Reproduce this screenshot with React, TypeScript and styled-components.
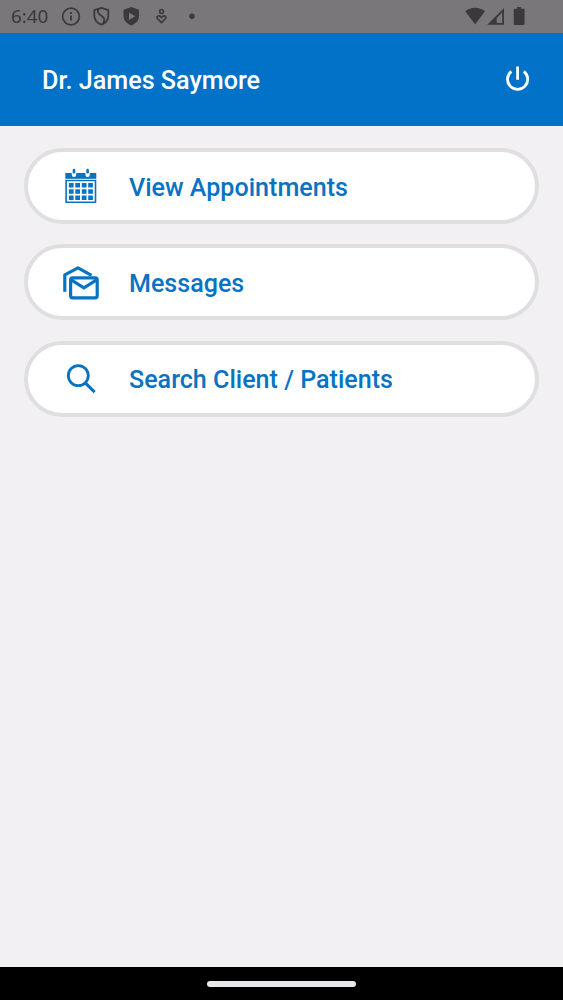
import React from "react";
import styled, { createGlobalStyle } from "styled-components";

const Global = createGlobalStyle`
  * { box-sizing: border-box; }
  body { margin: 0; background: #f2f0f3; font-family: Roboto, "Liberation Sans", sans-serif; }
  svg { display: block; flex: none; }
`;
const Screen = styled.div`
  width: 100%;
  height: 1000px;
  display: flex;
  flex-direction: column;
  background: #f2f0f3;
  overflow: hidden;
`;
const StatusBar = styled.div`
  height: 33px;
  flex: none;
  display: flex;
  align-items: center;
  justify-content: space-between;
  padding: 0 36px 0 11px;
  background: #7a777a;
  color: #3b393c;
`;
const StatusGroup = styled.div`
  display: flex;
  align-items: center;
`;
const Clock = styled.span`
  width: 50px;
  font-family: "Noto Sans", sans-serif;
  font-size: 18.8px;
  line-height: 33px;
  white-space: nowrap;
`;
const Header = styled.header`
  height: 93px;
  flex: none;
  display: flex;
  align-items: center;
  justify-content: space-between;
  padding: 0 31px 0 42px;
  background: #0271c8;
  color: #fff;
`;
const Title = styled.h1`
  margin: 3px 0 0;
  font-size: 25.15px;
  line-height: 32px;
  font-weight: 500;
  white-space: nowrap;
`;
const Menu = styled.main`
  flex: 1;
  display: flex;
  flex-direction: column;
  gap: 20.4px;
  padding: 22px 24px 0;
`;
const MenuButton = styled.button`
  height: 76px;
  flex: none;
  display: flex;
  align-items: center;
  gap: 30px;
  padding: 0 0 0 35px;
  border: 4px solid #dfdfe1;
  border-radius: 38px;
  background: #fff;
  color: #0873c2;
  font: 500 25.08px/32px Roboto, "Liberation Sans", sans-serif;
  text-align: left;
`;
const Label = styled.span`
  margin-top: 3px;
  white-space: nowrap;
`;
const NavBar = styled.div`
  height: 33px;
  flex: none;
  display: flex;
  align-items: center;
  justify-content: center;
  background: #000;
`;
const Handle = styled.div`
  width: 149px;
  height: 6px;
  border-radius: 3px;
  background: #ebe9eb;
`;

const NoticeIcons = () => (
  <svg width="140" height="33" viewBox="61 0 140 33" fill="none" stroke="currentColor">
    <circle cx="71" cy="16.5" r="8.4" strokeWidth="1.7" />
    <path d="M71 15.5v5M71 12v2" strokeWidth="1.8" />
    <path d="M94.3 10.2 101.5 7.8 108.3 10.2v5.3c0 4.2-2.7 7.6-6.8 9.2-4.2-1.6-7.2-5-7.2-9.2z" strokeWidth="1.8" strokeLinejoin="round" />
    <path d="M98.5 8.9c-1.8 3.5 0 5.2 3.2 7.2 3 1.9 3.2 4.6 1.4 7.4" strokeWidth="1.8" />
    <path d="M131.3 7 139 9.8v6c0 4.6-3.2 8.1-7.7 9.6-4.6-1.5-7.8-5-7.8-9.6v-6z" fill="currentColor" stroke="none" />
    <path d="M129 12.4v7.6l6.2-3.8z" fill="#7a777a" stroke="none" />
    <circle cx="161.5" cy="11.5" r="1.9" strokeWidth="1.5" />
    <path d="M161.5 22.6 157.5 18.5c-1.7-2.1 1.6-4.1 4-1.1 2.4-3 5.7-1 4 1.1z" strokeWidth="1.7" />
    <circle cx="192" cy="16.3" r="2.7" fill="currentColor" stroke="none" />
  </svg>
);
const SystemIcons = () => (
  <svg width="62" height="33" viewBox="465 0 62 33" fill="currentColor">
    <path d="M465.2 11.3c5.4-4.9 14.4-4.9 19.8 0L475.1 24.5z" />
    <path fillRule="evenodd" d="M504 8v16.7h-16.7zM502.2 12.5l-5.5 5.6v4.8h5.5z" />
    <path d="M517 7h4.2v1.8h2.2c.7 0 1.2.5 1.2 1.2v13.8c0 .7-.5 1.2-1.2 1.2h-8.5c-.7 0-1.2-.5-1.2-1.2V10c0-.7.5-1.2 1.2-1.2h2.1z" />
  </svg>
);
const PowerIcon = () => (
  <svg width="28" height="28" viewBox="0 0 28 28" fill="none" stroke="currentColor" strokeWidth="2.8">
    <path d="M13.6 .6v13.2M7.4 5.3a10.1 10.1 0 1 0 12.4 0" />
  </svg>
);
const CalendarIcon = () => (
  <svg width="36" height="36" viewBox="0 0 36 36" fill="currentColor">
    <path d="M2.3 5h31v5.8h-31z" />
    <path fillRule="evenodd" d="M2.3 11.8h31V35h-31zM3.9 13.2v20.2h27.8V13.2z" />
    {[15, 21.3, 27.5].map((y) =>
      [5.9, 12.3, 18.8, 25.2].map((x) => <rect key={`${x}-${y}`} x={x} y={y} width="4.7" height="4.5" />)
    )}
    {[11, 24.6].map((x) => (
      <g key={x}>
        <rect x={x - 2.2} y="2.4" width="4.4" height="6.6" rx="2.2" fill="#fff" />
        <rect x={x - 1.3} y="0.8" width="2.6" height="4.6" rx="1.2" />
      </g>
    ))}
  </svg>
);
const MessagesIcon = () => (
  <svg width="36" height="36" viewBox="0 0 36 36" fill="none" stroke="currentColor" strokeWidth="3.2">
    <path d="M1.8 27.7V10.8L15 3.8 28.5 11.3" strokeLinejoin="round" />
    <rect x="7.6" y="13.8" width="26.6" height="20" rx="2" />
    <path d="m7.8 15.7 13.1 8.1 13.1-8.1" />
  </svg>
);
const SearchIcon = () => (
  <svg width="36" height="36" viewBox="0 0 36 36" fill="none" stroke="currentColor" strokeWidth="2.8">
    <circle cx="15.3" cy="14.6" r="10" />
    <path d="m22.3 21.8 9.3 9.3" strokeWidth="3.1" />
  </svg>
);

const items = [
  { label: "View Appointments", Icon: CalendarIcon },
  { label: "Messages", Icon: MessagesIcon },
  { label: "Search Client / Patients", Icon: SearchIcon },
];

export default function App() {
  return (
    <Screen>
      <Global />
      <StatusBar>
        <StatusGroup>
          <Clock>6:40</Clock>
          <NoticeIcons />
        </StatusGroup>
        <SystemIcons />
      </StatusBar>
      <Header>
        <Title>Dr. James Saymore</Title>
        <PowerIcon />
      </Header>
      <Menu>
        {items.map(({ label, Icon }) => (
          <MenuButton key={label} type="button">
            <Icon />
            <Label>{label}</Label>
          </MenuButton>
        ))}
      </Menu>
      <NavBar>
        <Handle />
      </NavBar>
    </Screen>
  );
}
